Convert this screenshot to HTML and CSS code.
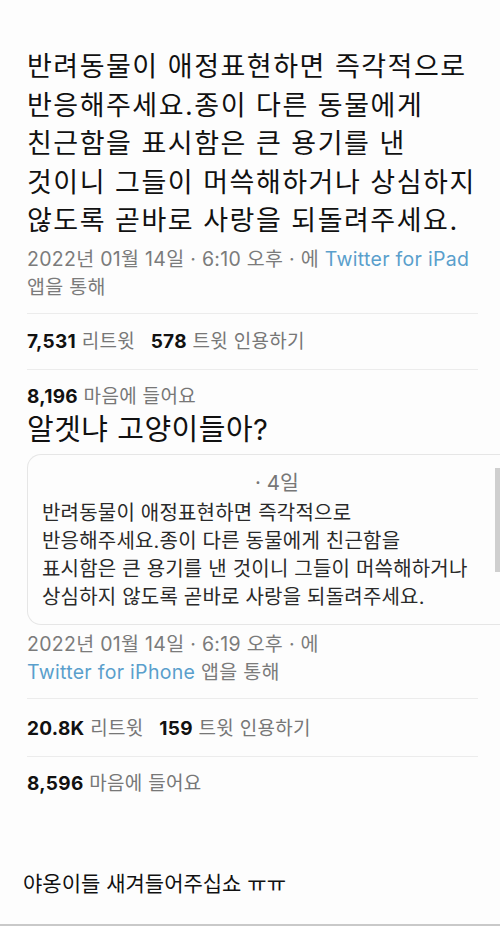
FILE: index.html
```html
<!DOCTYPE html>
<html lang="ko">
<head>
    <meta charset="UTF-8">
    <meta name="viewport" content="width=device-width, initial-scale=1.0">
    <title>알겟냐 고양이들아?</title>
    <link rel="stylesheet" href="styles.css">
</head>
<body>

    <div class="page">
        <p class="tweet-text">반려동물이 애정표현하면 즉각적으로<br>반응해주세요.종이 다른 동물에게<br>친근함을 표시함은 큰 용기를 낸<br>것이니 그들이 머쓱해하거나 상심하지<br>않도록 곧바로 사랑을 되돌려주세요.</p>

        <div class="meta">2022년 01월 14일 · 6:10 오후 · 에 <span class="link">Twitter for iPad</span><br>앱을 통해</div>

        <div class="stats"><b>7,531</b> 리트윗 <b class="gap">578</b> 트윗 인용하기</div>
        <div class="stats likes"><b>8,196</b> 마음에 들어요</div>

        <p class="reply">알겟냐 고양이들아?</p>

        <div class="quote">
            <div class="quote-head">· 4일</div>
            <p class="quote-text">반려동물이 애정표현하면 즉각적으로<br>반응해주세요.종이 다른 동물에게 친근함을<br>표시함은 큰 용기를 낸 것이니 그들이 머쓱해하거나<br>상심하지 않도록 곧바로 사랑을 되돌려주세요.</p>
        </div>

        <div class="meta meta-second">2022년 01월 14일 · 6:19 오후 · 에<br><span class="link">Twitter for iPhone</span> 앱을 통해</div>

        <div class="stats"><b>20.8K</b> 리트윗 <b class="gap">159</b> 트윗 인용하기</div>
        <div class="stats likes"><b>8,596</b> 마음에 들어요</div>

        <p class="caption">야옹이들 새겨들어주십쇼 ㅠㅠ</p>
    </div>

    <div class="scrollbar"></div>

</body>
</html>
```

FILE: styles.css
```css
/* Captured tweet page */
body {
    margin: 0;
    padding: 0;
    background-color: #fdfdfd;
    font-family: Inter, "Noto Sans CJK KR", sans-serif;
    color: #151515;
    width: 500px;
    height: 926px;
    overflow: hidden;
    position: relative;
    border-bottom: 2px solid #c9c9c9;
    box-sizing: border-box;
}

.page {
    padding: 48px 22px 0 27px;
}

.tweet-text {
    margin: 0;
    font-size: 27px;
    line-height: 38.5px;
    letter-spacing: 1.5px;
    color: #111;
    white-space: nowrap;
}

.meta {
    margin-top: 4px;
    font-size: 19.5px;
    line-height: 28px;
    letter-spacing: 0.3px;
    color: #7b7b7b;
    padding-bottom: 12px;
    border-bottom: 1px solid #ececec;
    white-space: nowrap;
}

.link {
    color: #5a9fcc;
}

.stats {
    font-size: 19px;
    line-height: 26px;
    letter-spacing: 0.3px;
    color: #777;
    padding: 15px 0 14px;
    border-bottom: 1px solid #ececec;
}

.stats b {
    color: #111;
    font-weight: 700;
}

.gap {
    margin-left: 10px;
}

.likes {
    border-bottom: none;
    padding: 14px 0 0;
}

.reply {
    margin: 2px 0 0;
    font-size: 29px;
    line-height: 36px;
    letter-spacing: 0.5px;
    color: #111;
}

.quote {
    margin: 6px -24px 0 0;
    padding: 15px 10px 12px 14px;
    border: 1px solid #e6e6e6;
    border-right: none;
    border-radius: 14px 0 0 14px;
}

.quote-head {
    text-align: center;
    font-size: 20.5px;
    line-height: 26px;
    color: #777;
    padding-left: 20px;
}

.quote-text {
    margin: 3px 0 0;
    font-size: 20px;
    line-height: 28.3px;
    letter-spacing: 0.2px;
    color: #2a2a2a;
    white-space: nowrap;
}

.meta-second {
    margin-top: 5px;
}

.meta-second + .stats {
    padding-top: 17px;
}

.caption {
    margin: 74px 0 0 -4px;
    font-size: 21px;
    line-height: 26px;
    color: #111;
}

.scrollbar {
    position: absolute;
    right: 0;
    top: 468px;
    width: 5px;
    height: 104px;
    background-color: #cfcfcf;
}
```
